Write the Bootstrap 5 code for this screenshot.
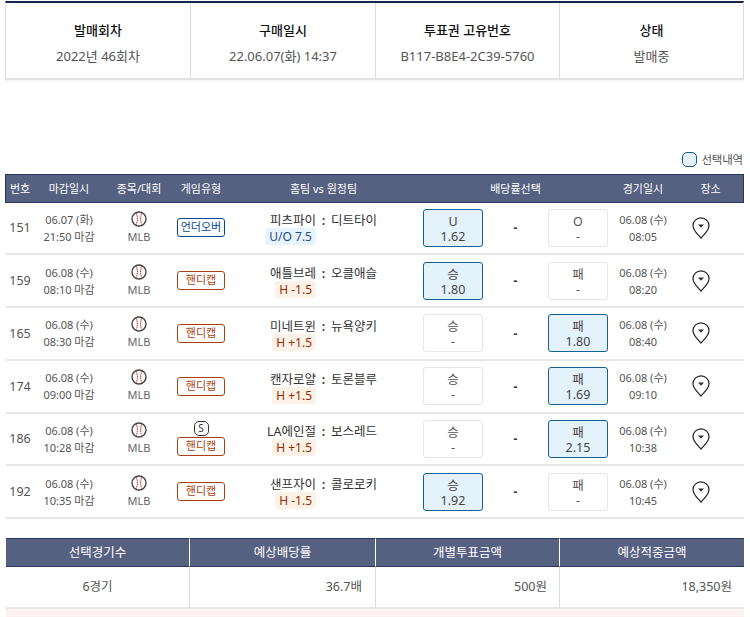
<!DOCTYPE html>
<html lang="ko"><head><meta charset="utf-8"><title>투표권</title>
<link href="https://cdn.jsdelivr.net/npm/bootstrap@5.3.0/dist/css/bootstrap.min.css" rel="stylesheet">
<style>
body{font-family:"Noto Sans","Noto Sans CJK KR",sans-serif;color:#555;background:#fff;font-size:12px;line-height:17px;overflow:hidden;height:617px}
.pg{width:739px;margin:1px 0 0 5px}
.info{display:grid;grid-template-columns:184px 185px 184px 1fr;border-top:2px solid #14264d;border-bottom:2px solid #e3e3e3;border-left:1px solid #ddd;border-right:1px solid #ddd;height:79px;box-shadow:0 2px 0 #f6f6f6}
.info>div{border-left:1px solid #ddd;text-align:center;padding-top:17px}
.info>div:first-child{border-left:0}
.info b{display:block;font-weight:500;font-size:13px;color:#111;line-height:20px;margin-bottom:6px}
.info span{font-size:13px;line-height:20px;color:#555}
.legend{margin-top:68px;height:26px;padding:0 1px 3px 0;display:flex;justify-content:flex-end;align-items:center;gap:4px;font-size:11.5px;color:#555;letter-spacing:-.2px}
.swatch{width:15px;height:15px;border:1.5px solid #0f5c96;border-radius:5px;background:#e5f2fc}
.grow,.ghead{display:grid;grid-template-columns:28px 70px 70px 54px 191px 4px 60px 65px 60px 70px 1fr;align-items:center;text-align:center}
.ghead{height:28.5px;background:#566182;color:#fff;font-size:11px;border:1px solid #27365e}
.ghead .hsel{grid-column:6/10;padding-left:4px}
.grow{height:52.75px;margin-left:1px;border-bottom:2px solid #e6e6e6;font-size:11px;line-height:17px}
.gno{font-size:12.5px}
.ball{display:block;margin:0 auto 1px}
.mlb{color:#666}
.tag{display:block;width:48px;height:19px;line-height:16px;margin:0 auto;border:1.5px solid #a8410f;border-radius:3px;color:#a8410f;font-size:11px;background:#fff}
.tag.uo{border-color:#00489a;color:#00489a}
.sym{display:block;width:15px;height:15px;margin:0 auto 1px;line-height:13px;border:1px solid #333;border-radius:5px;color:#333;font-size:10px}
.teams{display:grid;grid-template-columns:88px 15px 88px;font-size:12.5px;color:#333;line-height:15px}
.teams .h,.teams .a,.teams .c{padding-top:3px;white-space:nowrap}
.teams .h{text-align:right}
.teams .a{text-align:left}
.teams .c{text-align:center;font-weight:600}
.hcp{grid-column:1;justify-self:end;border-radius:3px;padding:0 4px;height:17px;line-height:17px;font-size:12px}
.hcp.b{background:#e8f4fd;color:#1c4c8a}
.hcp.o{background:#fdf2e7;color:#9c2a00}
.odd{height:38px;border:1.5px solid #e6e6e6;border-radius:3px;font-size:12.5px;line-height:15px;padding-top:4px;color:#555;background:#fff}
.odd.on{background:#e4f2fc;border-color:#14609a;color:#444}
.dash{font-weight:700;color:#333;font-size:12px}
.pin{display:block;margin-left:14px}
.sumg{margin-top:19px;display:grid;grid-template-columns:183px 186px 184px 1fr;margin-left:1px}
.sumg .sh{height:29px;background:#566182;color:#fff;font-size:12.5px;text-align:center;line-height:27px;border-top:1px solid #27365e;border-bottom:1px solid #27365e;border-left:1px solid #fff}
.sumg .sh:first-child{border-left:0}
.sumg .sh:last-child{border-right:1px solid #27365e}
.sumg .sd{height:42px;line-height:40px;font-size:12.5px;color:#555;padding:0 12px;text-align:right;border-left:1px solid #ddd;border-bottom:2px solid #e6e6e6}
.sumg .sd.first{border-left:0;text-align:center}
.sumg .sd.second{padding-right:13px}
.pinkbar{height:10px;margin-left:1px;background:#fdf0f0}
</style></head><body>
<svg width="0" height="0" class="d-block position-absolute"><defs>
<symbol id="ballI" viewBox="0 0 16 16"><circle cx="8" cy="8" r="7" fill="#fff" stroke="#444" stroke-width="1.4"/><path d="M5.2 2.2c1.6 3.5 1.6 8 0 11.6M10.8 2.2c-1.6 3.5-1.6 8 0 11.6" fill="none" stroke="#c0392b" stroke-width="1" stroke-dasharray="1.6 .6"/></symbol>
<symbol id="pinI" viewBox="0 0 18 22"><path d="M9 21C5 16.5 1 13.5 1 8.8a8 8 0 0 1 16 0C17 13.5 13 16.5 9 21Z" fill="#fff" stroke="#222" stroke-width="1.2"/><path d="M6 7.4h6L9 10.8Z" fill="#333"/></symbol>
</defs></svg>
<div class="pg">
<div class="info">
<div><b>발매회차</b><span>2022년 46회차</span></div>
<div><b>구매일시</b><span>22.06.07(화) 14:37</span></div>
<div><b>투표권 고유번호</b><span>B117-B8E4-2C39-5760</span></div>
<div><b>상태</b><span>발매중</span></div>
</div>
<div class="legend"><i class="swatch"></i><span>선택내역</span></div>
<div class="ghead"><div>번호</div><div>마감일시</div><div>종목/대회</div><div>게임유형</div><div>홈팀 vs 원정팀</div><div class="hsel">배당률선택</div><div>경기일시</div><div>장소</div></div>

<div class="grow"><div class="gno">151</div><div>06.07 (화)<br>21:50 마감</div><div><svg class="ball" width="16" height="16"><use href="#ballI"/></svg><span class="mlb">MLB</span></div><div><span class="tag uo">언더오버</span></div><div class="teams"><span class="h">피츠파이</span><span class="c">:</span><span class="a">디트타이</span><span class="hcp b">U/O 7.5</span></div><div></div><div class="odd on">U<br>1.62</div><div class="dash">-</div><div class="odd">O<br>-</div><div>06.08 (수)<br>08:05</div><div><svg class="pin" width="18" height="22"><use href="#pinI"/></svg></div></div>

<div class="grow"><div class="gno">159</div><div>06.08 (수)<br>08:10 마감</div><div><svg class="ball" width="16" height="16"><use href="#ballI"/></svg><span class="mlb">MLB</span></div><div><span class="tag">핸디캡</span></div><div class="teams"><span class="h">애틀브레</span><span class="c">:</span><span class="a">오클애슬</span><span class="hcp o">H -1.5</span></div><div></div><div class="odd on">승<br>1.80</div><div class="dash">-</div><div class="odd">패<br>-</div><div>06.08 (수)<br>08:20</div><div><svg class="pin" width="18" height="22"><use href="#pinI"/></svg></div></div>

<div class="grow"><div class="gno">165</div><div>06.08 (수)<br>08:30 마감</div><div><svg class="ball" width="16" height="16"><use href="#ballI"/></svg><span class="mlb">MLB</span></div><div><span class="tag">핸디캡</span></div><div class="teams"><span class="h">미네트윈</span><span class="c">:</span><span class="a">뉴욕양키</span><span class="hcp o">H +1.5</span></div><div></div><div class="odd">승<br>-</div><div class="dash">-</div><div class="odd on">패<br>1.80</div><div>06.08 (수)<br>08:40</div><div><svg class="pin" width="18" height="22"><use href="#pinI"/></svg></div></div>

<div class="grow"><div class="gno">174</div><div>06.08 (수)<br>09:00 마감</div><div><svg class="ball" width="16" height="16"><use href="#ballI"/></svg><span class="mlb">MLB</span></div><div><span class="tag">핸디캡</span></div><div class="teams"><span class="h">캔자로얄</span><span class="c">:</span><span class="a">토론블루</span><span class="hcp o">H +1.5</span></div><div></div><div class="odd">승<br>-</div><div class="dash">-</div><div class="odd on">패<br>1.69</div><div>06.08 (수)<br>09:10</div><div><svg class="pin" width="18" height="22"><use href="#pinI"/></svg></div></div>

<div class="grow"><div class="gno">186</div><div>06.08 (수)<br>10:28 마감</div><div><svg class="ball" width="16" height="16"><use href="#ballI"/></svg><span class="mlb">MLB</span></div><div><span class="sym">S</span><span class="tag">핸디캡</span></div><div class="teams"><span class="h">LA에인절</span><span class="c">:</span><span class="a">보스레드</span><span class="hcp o">H +1.5</span></div><div></div><div class="odd">승<br>-</div><div class="dash">-</div><div class="odd on">패<br>2.15</div><div>06.08 (수)<br>10:38</div><div><svg class="pin" width="18" height="22"><use href="#pinI"/></svg></div></div>

<div class="grow"><div class="gno">192</div><div>06.08 (수)<br>10:35 마감</div><div><svg class="ball" width="16" height="16"><use href="#ballI"/></svg><span class="mlb">MLB</span></div><div><span class="tag">핸디캡</span></div><div class="teams"><span class="h">샌프자이</span><span class="c">:</span><span class="a">콜로로키</span><span class="hcp o">H -1.5</span></div><div></div><div class="odd on">승<br>1.92</div><div class="dash">-</div><div class="odd">패<br>-</div><div>06.08 (수)<br>10:45</div><div><svg class="pin" width="18" height="22"><use href="#pinI"/></svg></div></div>

<div class="sumg">
<div class="sh">선택경기수</div><div class="sh">예상배당률</div><div class="sh">개별투표금액</div><div class="sh">예상적중금액</div>
<div class="sd first">6경기</div><div class="sd second">36.7배</div><div class="sd">500원</div><div class="sd">18,350원</div>
</div>
<div class="pinkbar"></div>
</div>
<script src="https://cdn.jsdelivr.net/npm/bootstrap@5.3.0/dist/js/bootstrap.bundle.min.js"></script>
</body></html>
